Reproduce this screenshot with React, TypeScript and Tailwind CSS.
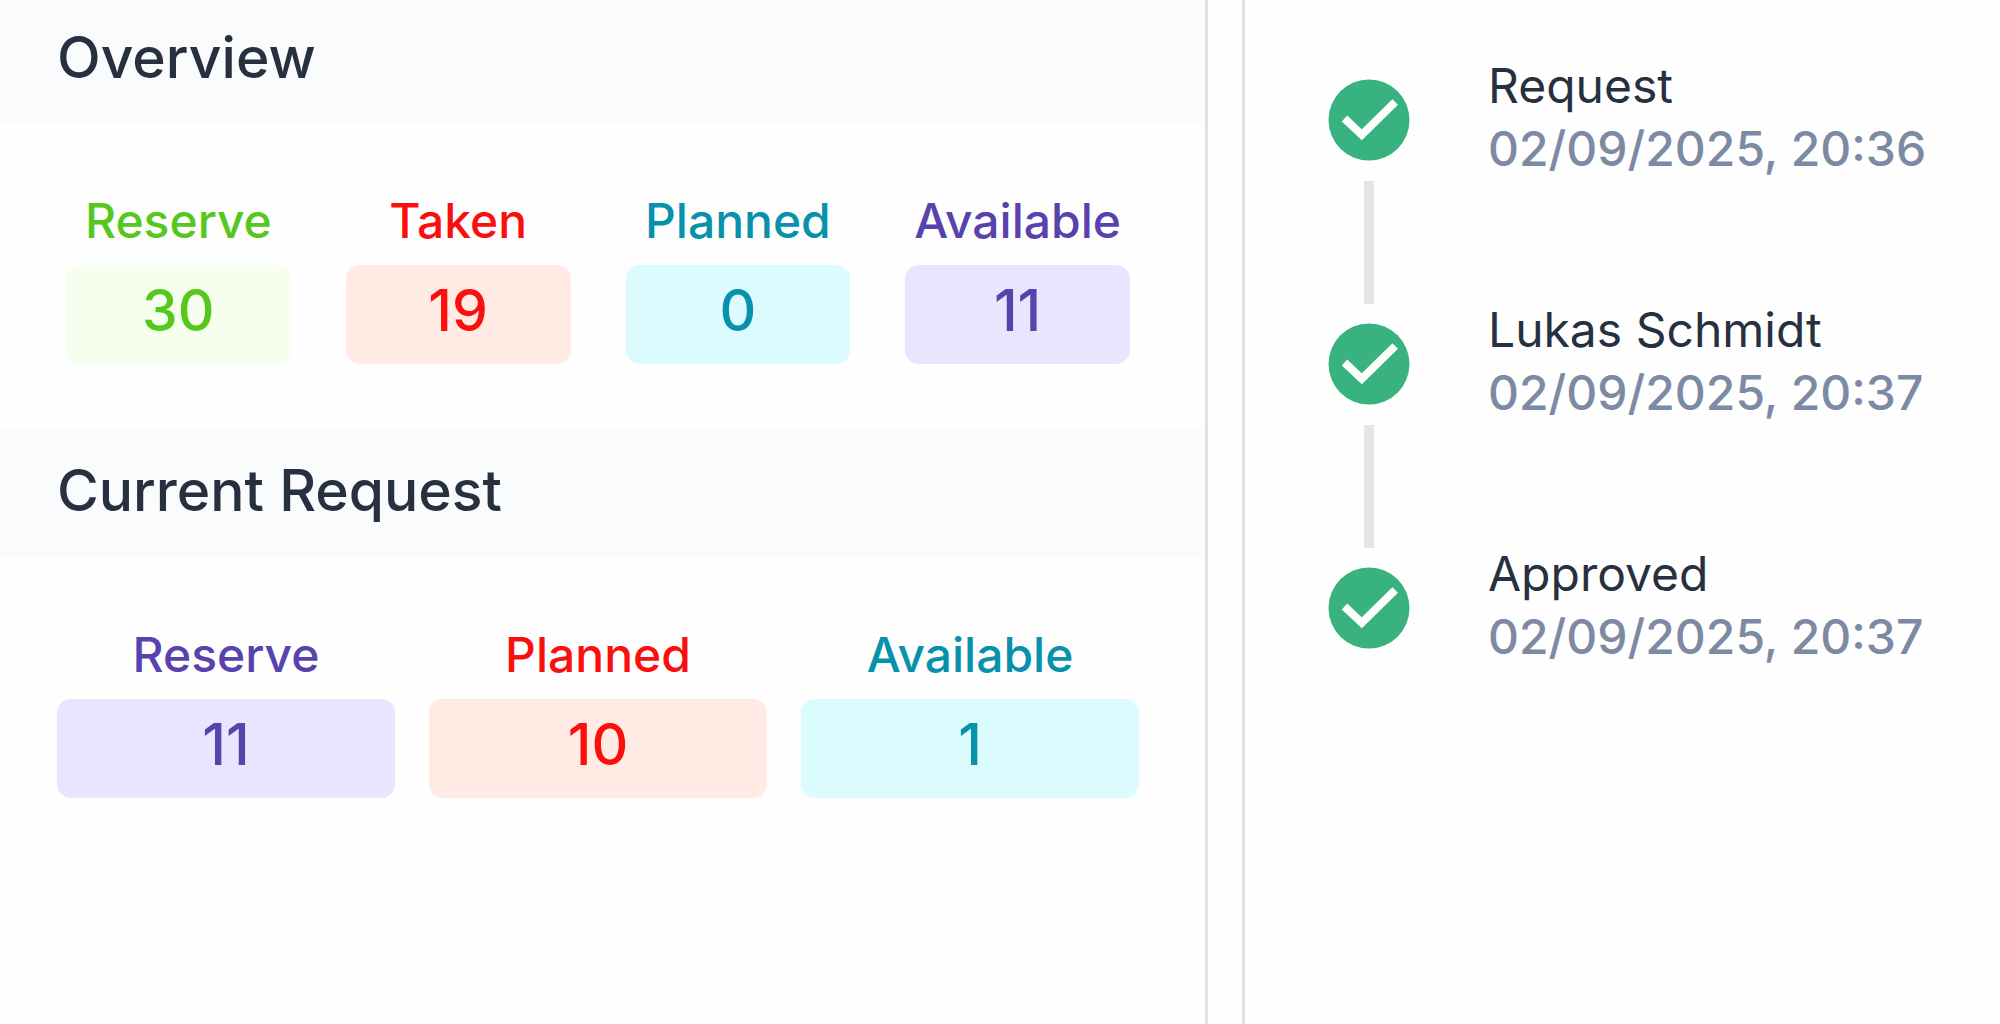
import clsx from "clsx";

type Tone = "green" | "red" | "cyan" | "purple";

interface Stat {
  label: string;
  value: number;
  tone: Tone;
}

interface Step {
  title: string;
  date: string;
}

const textTone: Record<Tone, string> = {
  green: "text-[#56c71c]",
  red: "text-[#fa0f0f]",
  cyan: "text-[#0891ab]",
  purple: "text-[#5843ad]",
};

const boxTone: Record<Tone, string> = {
  green: "bg-[#f6ffed]",
  red: "bg-[#ffeae4]",
  cyan: "bg-[#dbfbff]",
  purple: "bg-[#e9e5ff]",
};

const overview: Stat[] = [
  { label: "Reserve", value: 30, tone: "green" },
  { label: "Taken", value: 19, tone: "red" },
  { label: "Planned", value: 0, tone: "cyan" },
  { label: "Available", value: 11, tone: "purple" },
];

const currentRequest: Stat[] = [
  { label: "Reserve", value: 11, tone: "purple" },
  { label: "Planned", value: 10, tone: "red" },
  { label: "Available", value: 1, tone: "cyan" },
];

const steps: Step[] = [
  { title: "Request", date: "02/09/2025, 20:36" },
  { title: "Lukas Schmidt", date: "02/09/2025, 20:37" },
  { title: "Approved", date: "02/09/2025, 20:37" },
];

function SectionTitle({ children, first = false }: { children: string; first?: boolean }) {
  return (
    <h2 className={clsx("bg-[#fafbfd] pb-8 pl-[57px] text-[57px] leading-[68px] font-medium text-[#27303f]", first ? "pt-6" : "pt-[29px]")}>
      {children}
    </h2>
  );
}

function StatItem({ label, value, tone }: Stat) {
  return (
    <div className={clsx("min-w-0 text-center", textTone[tone])}>
      <dt className="text-[48px] leading-[64px] font-medium">{label}</dt>
      <dd className={clsx("mt-3 rounded-[14px] pt-3 pb-[19px] text-[57px] leading-[68px] font-medium", boxTone[tone])}>
        {value}
      </dd>
    </div>
  );
}

function CheckIcon() {
  return (
    <svg viewBox="0 0 82 82" className="size-[82px] shrink-0" aria-hidden="true">
      <circle cx="41" cy="41" r="40.5" fill="#38b27f" />
      <path d="M16.5 39.5 L33.8 55.8 L67.2 23" fill="none" stroke="#fff" strokeWidth="8" />
    </svg>
  );
}

export default function App() {
  return (
    <div className="grid min-h-screen grid-cols-[1208fr_758fr] gap-[34px] bg-[#fefefe] font-['Inter',sans-serif]">
      <main className="border-r-3 border-[#e0e0e7]">
        <section>
          <SectionTitle first>Overview</SectionTitle>
          <dl className="grid grid-cols-4 gap-[55px] pt-[65px] pr-[75px] pb-16 pl-[66px]">
            {overview.map((s) => <StatItem key={s.label} {...s} />)}
          </dl>
        </section>
        <section>
          <SectionTitle>Current Request</SectionTitle>
          <dl className="grid grid-cols-3 gap-[34px] pt-[66px] pr-[66px] pb-16 pl-[57px]">
            {currentRequest.map((s) => <StatItem key={s.label} {...s} />)}
          </dl>
        </section>
      </main>

      <aside className="border-l-3 border-[#e0e0e7] pt-[54px] pl-[83px]">
        <ol>
          {steps.map((step, i) => (
            <li key={step.title} className="flex gap-[78px]">
              <div className="flex flex-col items-center pt-[25px]">
                <CheckIcon />
                {i < steps.length - 1 && <div className="mt-5 -mb-[6px] h-[123px] w-[10px] bg-[#e5e5e5]" />}
              </div>
              <div className="whitespace-nowrap">
                <p className="text-[48px] leading-[63px] text-[#27303f]">{step.title}</p>
                <p className="text-[48px] leading-[63px] font-medium text-[#7d8aa3]">{step.date}</p>
              </div>
            </li>
          ))}
        </ol>
      </aside>
    </div>
  );
}
